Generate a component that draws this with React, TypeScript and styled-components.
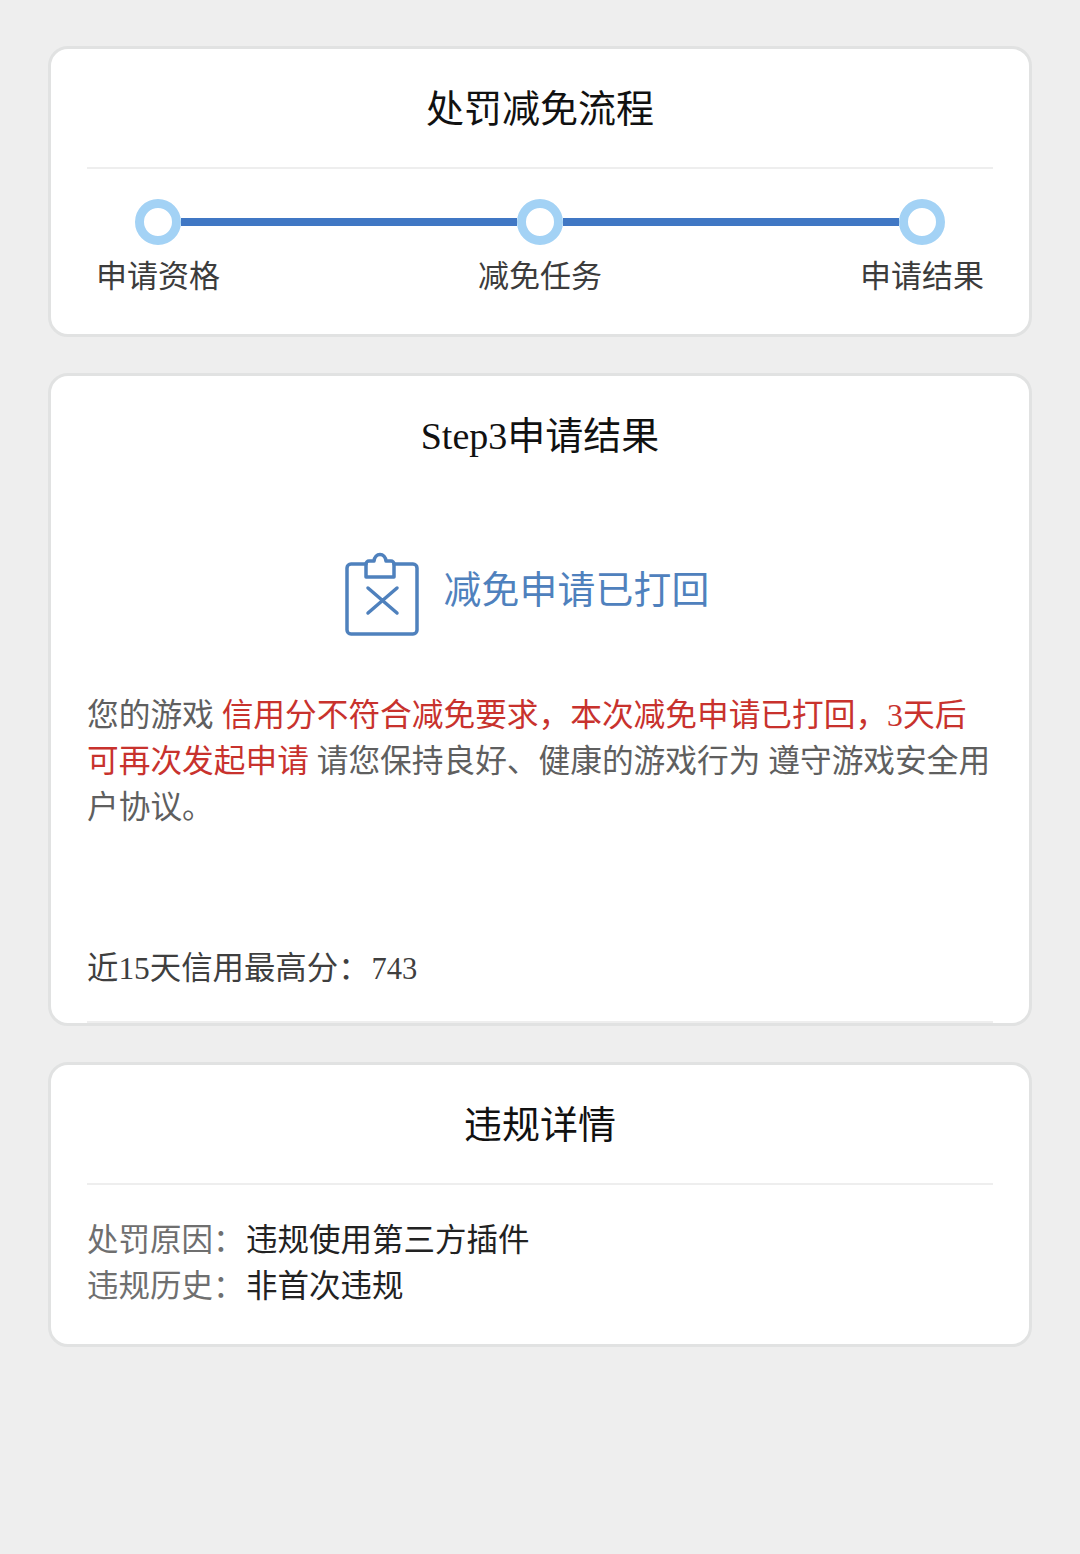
import React from 'react';
import styled, { createGlobalStyle } from 'styled-components';

const GlobalStyle = createGlobalStyle`
  html, body {
    margin: 0;
    padding: 0;
    background: #eeeeee;
  }
  body {
    font-family: "Liberation Serif", "Noto Sans CJK SC", serif;
  }
`;

const Page = styled.div`
  width: 1080px;
  height: 1554px;
  box-sizing: border-box;
  padding: 46px 48px 0;
  background: #eeeeee;
  display: flex;
  flex-direction: column;
  gap: 36px;
  overflow: hidden;
`;

const Card = styled.section<{ $height: number }>`
  box-sizing: border-box;
  height: ${({ $height }) => $height}px;
  background: #ffffff;
  border: 3px solid #e1e2e2;
  border-radius: 20px;
  padding: 0 36px;
  display: flex;
  flex-direction: column;
  overflow: hidden;
`;

const Title = styled.h2<{ $height: number; $lift: number }>`
  margin: 0;
  box-sizing: border-box;
  height: ${({ $height }) => $height}px;
  padding-bottom: ${({ $lift }) => $lift}px;
  display: flex;
  align-items: center;
  justify-content: center;
  font-size: 38px;
  font-weight: 400;
  color: #111111;
  flex: none;
`;

const Divider = styled.div`
  height: 2px;
  background: #eeeeee;
  flex: none;
`;

const Stepper = styled.div`
  display: flex;
  padding: 30px 9px 0;
`;

const Step = styled.div`
  flex: 0 0 124px;
  min-width: 0;
  display: flex;
  flex-direction: column;
  align-items: center;
  position: relative;
  z-index: 1;
`;

const Dot = styled.div`
  box-sizing: border-box;
  width: 46px;
  height: 46px;
  border-radius: 50%;
  border: 9px solid #a3d2f5;
  background: #ffffff;
`;

const StepLabel = styled.div`
  margin-top: 9px;
  font-size: 31px;
  line-height: 46px;
  color: #3c3c3c;
  white-space: nowrap;
`;

const Connector = styled.div`
  flex: 1;
  height: 8px;
  margin: 19px -39px 0;
  background: #4077c4;
`;

const ResultBody = styled.div`
  display: flex;
  flex-direction: column;
`;

const Status = styled.div`
  display: flex;
  align-items: center;
  justify-content: center;
  gap: 24px;
  margin-top: 55px;
  height: 86px;
  padding-right: 27px;
`;

const StatusText = styled.span`
  font-size: 37.8px;
  letter-spacing: 0.2px;
  color: #4f81bd;
  position: relative;
  top: -8px;
`;

const Paragraph = styled.p`
  margin: 56px 0 0;
  font-size: 31.7px;
  line-height: 46px;
  color: #5f5f5f;
`;

const Danger = styled.span`
  color: #c8322d;
`;

const Score = styled.div`
  margin-top: 115px;
  font-size: 31.4px;
  line-height: 46px;
  color: #3f3f3f;
`;

const ScoreValue = styled.span`
  margin-left: 2px;
  font-size: 30.5px;
`;

const BottomRule = styled(Divider)`
  margin-top: 29px;
`;

const Details = styled.div`
  padding-top: 33px;
`;

const DetailRow = styled.div`
  display: flex;
  font-size: 31.5px;
  line-height: 46px;
  white-space: nowrap;
`;

const DetailLabel = styled.span`
  flex: 0 0 159px;
  color: #6f6f6f;
`;

const DetailValue = styled.span`
  color: #222222;
`;

const ClipboardIcon = () => (
  <svg width="76" height="86" viewBox="0 0 76 86" fill="none" stroke="#4f81bd" strokeWidth="3.5" strokeLinecap="round" strokeLinejoin="round">
    <path d="M22 13H7a4 4 0 0 0-4 4v62a4 4 0 0 0 4 4h62a4 4 0 0 0 4-4V17a4 4 0 0 0-4-4H50" />
    <path d="M22 26V13a3 3 0 0 1 3-3h5c.5-4 3-6.500 6-6.500s5.500 2.500 6 6.500h5a3 3 0 0 1 3 3v13z" />
    <path d="M24 37l29 25M53 37L24 62" />
  </svg>
);

const steps = ['申请资格', '减免任务', '申请结果'];

const App: React.FC = () => {
  return (
    <Page>
      <GlobalStyle />

      <Card $height={291}>
        <Title $height={118} $lift={5}>处罚减免流程</Title>
        <Divider />
        <Stepper>
          {steps.map((label, i) => (
            <React.Fragment key={label}>
              {i > 0 && <Connector />}
              <Step>
                <Dot />
                <StepLabel>{label}</StepLabel>
              </Step>
            </React.Fragment>
          ))}
        </Stepper>
      </Card>

      <Card $height={653}>
        <ResultBody>
          <Title $height={120} $lift={8}>Step3申请结果</Title>
          <Status>
            <ClipboardIcon />
            <StatusText>减免申请已打回</StatusText>
          </Status>
          <Paragraph>
            您的游戏 <Danger>信用分不符合减免要求，本次减免申请已打回，3天后可再次发起申请</Danger> 请您保持良好、健康的游戏行为 遵守游戏安全用户协议。
          </Paragraph>
          <Score>近15天信用最高分：<ScoreValue>743</ScoreValue></Score>
          <BottomRule />
        </ResultBody>
      </Card>

      <Card $height={285}>
        <Title $height={118} $lift={6}>违规详情</Title>
        <Divider />
        <Details>
          <DetailRow>
            <DetailLabel>处罚原因：</DetailLabel>
            <DetailValue>违规使用第三方插件</DetailValue>
          </DetailRow>
          <DetailRow>
            <DetailLabel>违规历史：</DetailLabel>
            <DetailValue>非首次违规</DetailValue>
          </DetailRow>
        </Details>
      </Card>
    </Page>
  );
};

export default App;
